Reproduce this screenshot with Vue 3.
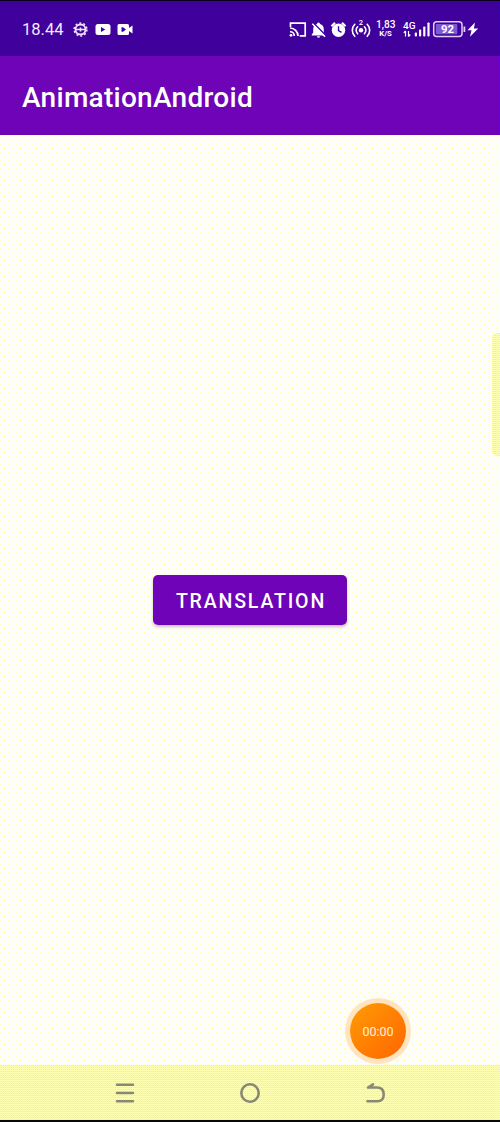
<script setup>
const bars = [4, 7, 10, 14]
</script>

<template>
  <div class="phone">
    <header class="status">
      <span class="time">18.44</span>
      <svg class="sysicons" viewBox="70 0 70 56" width="70" height="56" fill="#fff">
        <circle cx="80.5" cy="29.5" r="5" fill="none" stroke="#eee4ff" stroke-width="1.8" />
        <circle cx="80.5" cy="29.5" r="6.400" fill="none" stroke="#eee4ff" stroke-width="1.5" stroke-dasharray="2 2.02" />
        <path d="M75.500 29.500h10M80.500 27.500v4" stroke="#eee4ff" stroke-width="1.600" />
        <rect x="95.500" y="24" width="15" height="11" rx="2.500" />
        <path d="M101 27v5l4.300-2.500z" fill="#3700b3" />
        <path d="M119 24h8.500q1.500 0 1.500 1.500v2.500l3.500-2.500v8l-3.500-2.500v2.500q0 1.500-1.500 1.500H119q-1.500 0-1.500-1.500v-8Q117.500 24 119 24z" />
        <path d="M121.500 27.300h1.500l3 2.200-3 2.200h-1.500z" fill="#3700b3" />
      </svg>
      <svg class="indicators" viewBox="285 0 215 56" width="215" height="56" fill="#fff">
        <path d="M290.500 27v-3.800h14.700v12.600h-5.500M290 28a8 8 0 0 1 8 8M290 31.700a4.300 4.300 0 0 1 4.300 4.300" fill="none" stroke="#fff" stroke-width="1.700" />
        <circle cx="291" cy="35.300" r="1.400" />
        <path d="M318.500 22.500q1.500 0 1.500 1.600 3.800 1 3.800 5.400v3l1.500 2.200v.8h-13.600v-.8l1.500-2.200v-3q0-4.400 3.800-5.400 0-1.600 1.500-1.600zM316.900 36.300h3.200q-.3 1.500-1.600 1.500t-1.600-1.500z" />
        <path d="M313.300 22.800l12.500 12.700" stroke="#3700b3" stroke-width="1.500" />
        <path d="M312.300 23.800l12.700 13" stroke="#fff" stroke-width="1.500" />
        <circle cx="338.500" cy="30.200" r="6.700" />
        <path d="M331.500 26.200l3.500-3.500M345.500 26.200l-3.500-3.500" stroke="#fff" stroke-width="2.200" />
        <path d="M338.500 26.200v4.400l3 1.800" fill="none" stroke="#3700b3" stroke-width="1.400" />
        <circle cx="361" cy="30.300" r="2.200" />
        <g fill="none" stroke="#fff" stroke-width="1.600" stroke-linecap="round">
          <path d="M357.600 26.800a4.900 4.900 0 0 0 0 7M364.400 26.800a4.900 4.900 0 0 1 0 7M354.800 24.300a8.500 8.500 0 0 0 0 12M367.200 24.300a8.500 8.500 0 0 1 0 12" />
        </g>
        <text x="358.800" y="25.300" font-size="7.500" font-weight="500">2</text>
        <text x="376" y="28" font-size="10.500" font-weight="500" textLength="19.500" lengthAdjust="spacingAndGlyphs">1,83</text>
        <text x="379.300" y="36" font-size="7.500" font-weight="700" textLength="12.500" lengthAdjust="spacingAndGlyphs">K/S</text>
        <text x="403" y="29" font-size="9.800" font-weight="500" textLength="12.500" lengthAdjust="spacingAndGlyphs">4G</text>
        <path d="M405.500 36.500v-5.500M403.800 32.800l1.700-2M408.500 31v5.500M410.200 34.500l-1.700 2" fill="none" stroke="#fff" stroke-width="1.200" />
        <rect v-for="(h, i) in bars" :key="h" :x="414.800 + i * 4.200" :y="36.500 - h" width="2.200" :height="h" rx=".8" />
        <rect x="433.700" y="21.700" width="28.300" height="14.800" rx="3" fill="none" stroke="#ddcff5" stroke-width="1.500" />
        <rect x="435.800" y="24" width="21.500" height="10.300" rx="1" fill="#7c58d4" />
        <text x="441" y="33.200" font-size="11" font-weight="700" textLength="13" lengthAdjust="spacingAndGlyphs">92</text>
        <path d="M464.400 26.500v5.500" stroke="#ddcff5" stroke-width="1.800" />
        <path d="M475 22.500l-7.500 7.800h4l-1.500 6.500 8.200-8.300h-4.300z" />
      </svg>
    </header>
    <div class="appbar"><h1>AnimationAndroid</h1></div>
    <main>
      <button>TRANSLATION</button>
      <div class="edge"></div>
      <div class="timer"><span>00:00</span></div>
    </main>
    <nav>
      <svg viewBox="0 0 24 24" width="24" height="24"><path d="M4 3.700h16M4 12h16M4 20.300h16" /></svg>
      <svg viewBox="0 0 24 24" width="24" height="24"><circle cx="12" cy="12" r="8.700" /></svg>
      <svg viewBox="0 0 24 24" width="24" height="24"><path d="M10 3.300L5 6.500H14q6.700 0 6.700 7T14 20.300H4.500" /></svg>
    </nav>
  </div>
</template>

<style>
body { background: #fcfcfa; }
</style>

<style scoped>
.phone {
  position: relative;
  display: flex;
  flex-direction: column;
  width: 500px;
  height: 1122px;
  box-sizing: border-box;
  overflow: hidden;
  border-top: 1px solid #08001a;
  border-bottom: 2px solid #080808;
  font-family: Roboto, sans-serif;
  color: #fff;
}
.status {
  display: flex;
  flex: none;
  height: 55px;
  background: conic-gradient(#3500bc 0 25%, #40009c 0 50%, #3500bc 0 75%, #3500bc 0) 1px 0 / 2px 2px;
}
.status svg { margin-top: -1px; flex: none; }
.status text { font-family: Roboto, sans-serif; }
.time {
  width: 48px;
  padding-left: 22px;
  font-size: 16.500px;
  line-height: 58px;
  color: #f2eaff;
}
.indicators { margin-left: 145px; }
.appbar, button {
  background: conic-gradient(#6000f4 0 25%, #6c00b4 0 50%, #6000f4 0 75%, #6000f4 0) 0 0 / 2px 2px;
}
.appbar {
  flex: none;
  display: flex;
  align-items: center;
  height: 79px;
  padding-left: 22px;
  box-sizing: border-box;
  background-position: 1px 1px;
}
h1 {
  margin: 5px 0 0;
  font-size: 28px;
  line-height: 34px;
  font-weight: 500;
  letter-spacing: .28px;
}
main {
  position: relative;
  flex: 1;
  display: flex;
  align-items: center;
  justify-content: center;
  background:
    conic-gradient(from 270deg at 1px 1px, #ffffb0 25%, transparent 0) 0 1px / 8px 8px,
    conic-gradient(from 270deg at 1px 1px, #ffffb0 25%, transparent 0) 4px 5px / 8px 8px,
    #fdfdfd;
}
button {
  width: 194px;
  height: 50px;
  margin: 0;
  padding: 2px 0 0 2px;
  border: 0;
  border-radius: 5px;
  box-shadow: 0 2px 3px rgba(60, 50, 70, .3);
  color: #fff;
  font: 500 19.500px Roboto, sans-serif;
  letter-spacing: 1.850px;
}
.edge, nav {
  background: conic-gradient(#e2e2f2 0 25%, #fafafa 0 50%, #fafaac 0 75%, #f2f2f0 0) 0 0 / 2px 2px;
}
.edge {
  position: absolute;
  right: 0;
  top: 198px;
  width: 8px;
  height: 123px;
  border-radius: 5px 0 0 5px;
}
.timer {
  position: absolute;
  left: 350px;
  top: 868px;
  display: flex;
  align-items: center;
  justify-content: center;
  width: 56px;
  height: 56px;
  border-radius: 50%;
  background: linear-gradient(135deg, #ff9c05, #ff6500);
  box-shadow: 0 0 0 5px #ffe4be;
  font-size: 12.500px;
  color: #fff0dc;
}
nav {
  flex: none;
  display: flex;
  justify-content: center;
  gap: 101px;
  height: 55px;
}
nav svg { margin-top: 16px; fill: none; stroke: #888878; stroke-width: 2.600; stroke-linecap: round; stroke-linejoin: round; }
</style>
